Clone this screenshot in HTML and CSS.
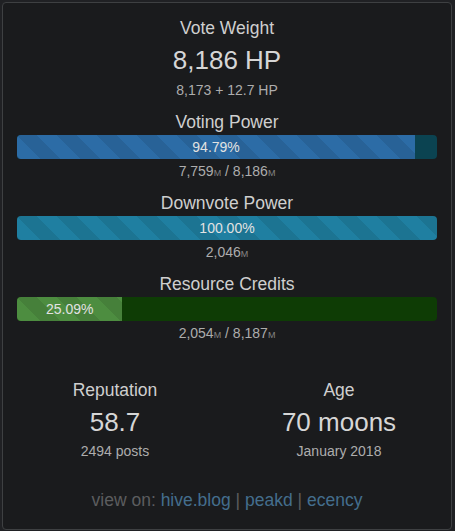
FILE: index.html
```html
<!DOCTYPE html>
<html lang="en">
<head>
    <meta charset="UTF-8">
    <meta name="viewport" content="width=device-width, initial-scale=1.0">
    <title>Account stats</title>
    <link rel="stylesheet" href="styles.css">
</head>
<body>
    <div class="card">
        <div class="block">
            <div class="title">Vote Weight</div>
            <div class="big">8,186 HP</div>
            <div class="sub">8,173 + 12.7 HP</div>
        </div>

        <div class="block">
            <div class="title">Voting Power</div>
            <div class="bar bar-vp">
                <div class="fill" style="width: 94.79%;">94.79%</div>
            </div>
            <div class="sub">7,759<small>M</small> / 8,186<small>M</small></div>
        </div>

        <div class="block">
            <div class="title">Downvote Power</div>
            <div class="bar bar-dv">
                <div class="fill" style="width: 100%;">100.00%</div>
            </div>
            <div class="sub">2,046<small>M</small></div>
        </div>

        <div class="block">
            <div class="title">Resource Credits</div>
            <div class="bar bar-rc">
                <div class="fill" style="width: 25.09%;">25.09%</div>
            </div>
            <div class="sub">2,054<small>M</small> / 8,187<small>M</small></div>
        </div>

        <div class="stats">
            <div class="stat">
                <div class="title">Reputation</div>
                <div class="big">58.7</div>
                <div class="sub">2494 posts</div>
            </div>
            <div class="stat">
                <div class="title">Age</div>
                <div class="big">70 moons</div>
                <div class="sub">January 2018</div>
            </div>
        </div>

        <div class="links">
            view on: <a href="#">hive.blog</a> | <a href="#">peakd</a> | <a href="#">ecency</a>
        </div>
    </div>
</body>
</html>
```

FILE: styles.css
```css
body {
    font-family: "Liberation Sans", Arial, sans-serif;
    margin: 0;
    padding: 2px 3px 3px 2px;
    background-color: #202124;
    color: #cfcfcf;
    text-align: center;
}
.card {
    background-color: #1a1b1d;
    border: 1px solid #3e4042;
    border-radius: 4px;
    padding: 14px 0 16px;
    height: 496px;
}
.block {
    padding: 0 14px;
    margin-bottom: 10px;
}
.block:first-child {
    margin-bottom: 12px;
}
.title {
    font-size: 17.5px;
    line-height: 22px;
    color: #cfcfcf;
}
.big {
    font-size: 26px;
    line-height: 30px;
    color: #d6d6d6;
    margin-top: 6px;
}
.sub {
    font-size: 14px;
    line-height: 18px;
    color: #adadad;
}
.block:first-child .sub {
    margin-top: 6px;
}
.sub small {
    font-size: 9px;
    color: #858585;
}
.bar {
    height: 24px;
    border-radius: 4px;
    overflow: hidden;
    margin: 2px 0 3px;
    display: flex;
}
.fill {
    height: 100%;
    line-height: 24px;
    font-size: 14px;
    color: #e2e2e2;
    background-image: linear-gradient(45deg, rgba(0, 0, 0, .09) 25%, transparent 25%, transparent 50%, rgba(0, 0, 0, .09) 50%, rgba(0, 0, 0, .09) 75%, transparent 75%, transparent);
    background-size: 40px 40px;
}
.bar-vp {
    background-color: #0b4351;
}
.bar-vp .fill {
    background-color: #2c6ca6;
}
.bar-dv {
    background-color: #0b4351;
}
.bar-dv .fill {
    background-color: #1f7fa1;
}
.bar-rc {
    background-color: #0e3c05;
}
.bar-rc .fill {
    background-color: #4d8d40;
}
.stats {
    display: grid;
    grid-template-columns: 1fr 1fr;
    margin-top: 35px;
}
.stat .big {
    margin-top: 6px;
}
.stat .sub {
    margin-top: 5px;
}
.links {
    margin-top: 29px;
    font-size: 17.5px;
    line-height: 22px;
    color: #5c5d5f;
}
.links a {
    color: #446e8d;
    text-decoration: none;
}
```
